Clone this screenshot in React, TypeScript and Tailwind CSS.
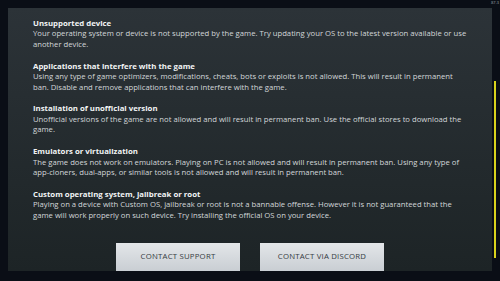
import React from "react";

const sections = [
  {
    t: "Unsupported device",
    b: "Your operating system or device is not supported by the game. Try updating your OS to the latest version available or use another device.",
  },
  {
    t: "Applications that interfere with the game",
    b: "Using any type of game optimizers, modifications, cheats, bots or exploits is not allowed. This will result in permanent ban. Disable and remove applications that can interfere with the game.",
  },
  {
    t: "Installation of unofficial version",
    b: "Unofficial versions of the game are not allowed and will result in permanent ban. Use the official stores to download the game.",
  },
  {
    t: "Emulators or virtualization",
    b: "The game does not work on emulators. Playing on PC is not allowed and will result in permanent ban. Using any type of app-cloners, dual-apps, or similar tools is not allowed and will result in permanent ban.",
  },
  {
    t: "Custom operating system, jailbreak or root",
    b: "Playing on a device with Custom OS, jailbreak or root is not a bannable offense. However it is not guaranteed that the game will work properly on such device. Try installing the official OS on your device.",
  },
];

export default function App() {
  return (
    <div
      className="relative w-[500px] h-[281px] bg-[#0a0e16] overflow-hidden"
      style={{ fontFamily: '"Open Sans", "Noto Sans", sans-serif' }}
    >
      <div className="absolute right-[1px] top-0 text-[4px] leading-[5px] text-[#9aa0a8]">87.3</div>
      <div className="absolute left-[8px] top-[8px] w-[484px] h-[263px] bg-gradient-to-b from-[#2c3338] to-[#1d2426] flex flex-col">
        <div className="pl-[25px] pr-[23px] pt-[10px] flex flex-col gap-[11.5px] flex-1">
          {sections.map((s) => (
            <div key={s.t} className="flex flex-col">
              <div className="text-[7.8px] leading-[10.4px] font-bold text-[#f2f4f5]">{s.t}</div>
              <div className="text-[7.7px] leading-[10.4px] text-[#d3d7da]">{s.b}</div>
            </div>
          ))}
        </div>
        <div className="flex justify-center gap-[20px]">
          <button className="w-[124px] h-[28px] bg-gradient-to-b from-[#e3e6e9] to-[#c9ced3] text-[#363c43] text-[7.8px] tracking-[0.2px]">
            CONTACT SUPPORT
          </button>
          <button className="w-[124px] h-[28px] bg-gradient-to-b from-[#e3e6e9] to-[#c9ced3] text-[#363c43] text-[7.8px] tracking-[0.2px]">
            CONTACT VIA DISCORD
          </button>
        </div>
      </div>
      <div className="absolute left-[494px] top-[81px] w-[2px] h-[177px] bg-[#d9d21c]" />
    </div>
  );
}
